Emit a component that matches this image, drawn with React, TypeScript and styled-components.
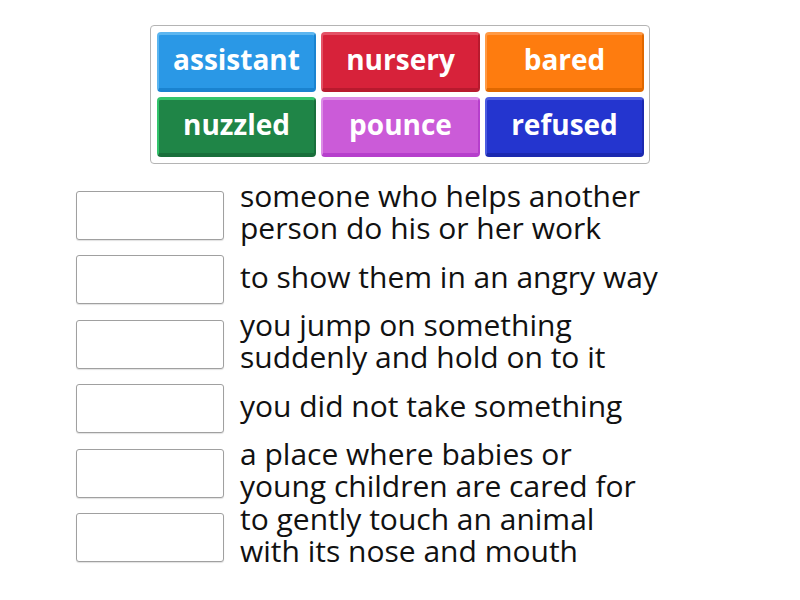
import React from 'react';
import styled, { createGlobalStyle } from 'styled-components';

const GlobalStyle = createGlobalStyle`
  html, body {
    margin: 0;
    padding: 0;
    background: #ffffff;
    font-family: "Open Sans", "Liberation Sans", sans-serif;
  }
`;

const Page = styled.div`
  width: 800px;
  height: 600px;
  padding-top: 25px;
  box-sizing: border-box;
`;

const TileBox = styled.div`
  width: 500px;
  margin: 0 auto;
  box-sizing: border-box;
  padding: 6px;
  border: 1px solid #b4b4b4;
  border-radius: 4px;
  display: grid;
  grid-template-columns: repeat(3, 159px);
  grid-auto-rows: 60px;
  gap: 5px;
`;

const Tile = styled.div<{ base: string; light: string; dark: string }>`
  box-sizing: border-box;
  background: ${p => p.base};
  border-top: 3px solid ${p => p.light};
  border-bottom: 4px solid ${p => p.dark};
  border-left: 2px solid ${p => p.light};
  border-right: 2px solid ${p => p.dark};
  border-radius: 4px;
  color: #ffffff;
  font-weight: 700;
  font-size: 28px;
  display: flex;
  align-items: center;
  justify-content: center;
  padding-bottom: 6px;
`;

const List = styled.div`
  margin: 19px 0 0 76px;
  display: flex;
  flex-direction: column;
`;

const Row = styled.div`
  height: 64.5px;
  display: flex;
  align-items: center;
`;

const Slot = styled.div`
  width: 148px;
  height: 49px;
  flex-shrink: 0;
  box-sizing: border-box;
  border: 1px solid #a0a0a0;
  border-radius: 3px;
  background: #fff;
  box-shadow: 0 1px 1px rgba(0, 0, 0, 0.12);
`;

const Clue = styled.div`
  margin-left: 16px;
  padding-bottom: 6px;
  font-size: 30px;
  line-height: 32px;
  color: #111;
  width: 470px;
`;

const tiles = [
  { word: 'assistant', base: '#2a98e6', light: '#5cb6f0', dark: '#1a83d0' },
  { word: 'nursery', base: '#d7223a', light: '#e45266', dark: '#b81a2e' },
  { word: 'bared', base: '#fe7c0f', light: '#ff9a45', dark: '#e06800' },
  { word: 'nuzzled', base: '#1f8547', light: '#33c46c', dark: '#196f3b' },
  { word: 'pounce', base: '#cb5bd8', light: '#dc8ce6', dark: '#b63fcc' },
  { word: 'refused', base: '#2435cf', light: '#4c5ce0', dark: '#1b29b0' },
];

const clues = [
  ['someone who helps another', 'person do his or her work'],
  ['to show them in an angry way'],
  ['you jump on something', 'suddenly and hold on to it'],
  ['you did not take something'],
  ['a place where babies or', 'young children are cared for'],
  ['to gently touch an animal', 'with its nose and mouth'],
];

export default function App() {
  return (
    <Page>
      <GlobalStyle />
      <TileBox>
        {tiles.map(t => (
          <Tile key={t.word} base={t.base} light={t.light} dark={t.dark}>
            {t.word}
          </Tile>
        ))}
      </TileBox>
      <List>
        {clues.map((lines, i) => (
          <Row key={i}>
            <Slot />
            <Clue>
              {lines.map((l, j) => (
                <div key={j}>{l}</div>
              ))}
            </Clue>
          </Row>
        ))}
      </List>
    </Page>
  );
}
